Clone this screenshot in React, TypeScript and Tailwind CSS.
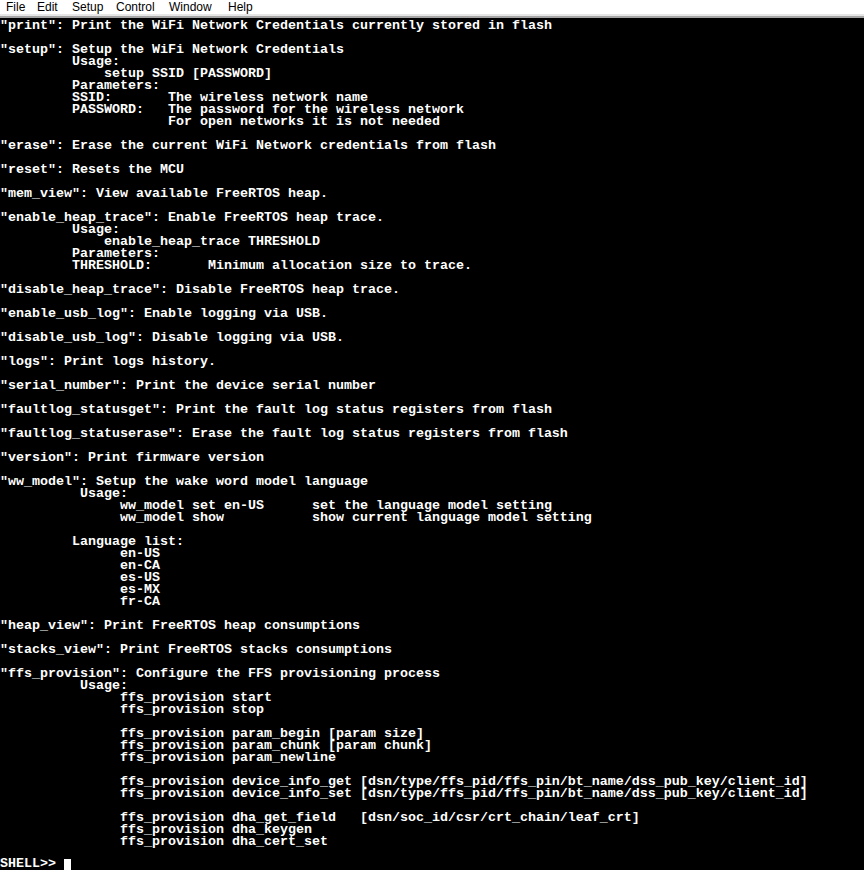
const menu = [
  { label: "File", w: "w-[31px]" },
  { label: "Edit", w: "w-[35px]" },
  { label: "Setup", w: "w-[44px]" },
  { label: "Control", w: "w-[53px]" },
  { label: "Window", w: "w-[59px]" },
  { label: "Help", w: "w-[30px]" },
]

const pad = (n: number) => " ".repeat(n)

// one entry per 12px terminal row, column widths are 8px
const lines: string[] = [
  '"print": Print the WiFi Network Credentials currently stored in flash',
  "",
  '"setup": Setup the WiFi Network Credentials',
  pad(9) + "Usage:",
  pad(13) + "setup SSID [PASSWORD]",
  pad(9) + "Parameters:",
  pad(9) + "SSID:       The wireless network name",
  pad(9) + "PASSWORD:   The password for the wireless network",
  pad(21) + "For open networks it is not needed",
  "",
  '"erase": Erase the current WiFi Network credentials from flash',
  "",
  '"reset": Resets the MCU',
  "",
  '"mem_view": View available FreeRTOS heap.',
  "",
  '"enable_heap_trace": Enable FreeRTOS heap trace.',
  pad(9) + "Usage:",
  pad(13) + "enable_heap_trace THRESHOLD",
  pad(9) + "Parameters:",
  pad(9) + "THRESHOLD:       Minimum allocation size to trace.",
  "",
  '"disable_heap_trace": Disable FreeRTOS heap trace.',
  "",
  '"enable_usb_log": Enable logging via USB.',
  "",
  '"disable_usb_log": Disable logging via USB.',
  "",
  '"logs": Print logs history.',
  "",
  '"serial_number": Print the device serial number',
  "",
  '"faultlog_statusget": Print the fault log status registers from flash',
  "",
  '"faultlog_statuserase": Erase the fault log status registers from flash',
  "",
  '"version": Print firmware version',
  "",
  '"ww_model": Setup the wake word model language',
  pad(10) + "Usage:",
  pad(15) + "ww_model set en-US      set the language model setting",
  pad(15) + "ww_model show           show current language model setting",
  "",
  pad(9) + "Language list:",
  pad(15) + "en-US",
  pad(15) + "en-CA",
  pad(15) + "es-US",
  pad(15) + "es-MX",
  pad(15) + "fr-CA",
  "",
  '"heap_view": Print FreeRTOS heap consumptions',
  "",
  '"stacks_view": Print FreeRTOS stacks consumptions',
  "",
  '"ffs_provision": Configure the FFS provisioning process',
  pad(10) + "Usage:",
  pad(15) + "ffs_provision start",
  pad(15) + "ffs_provision stop",
  "",
  pad(15) + "ffs_provision param_begin [param size]",
  pad(15) + "ffs_provision param_chunk [param chunk]",
  pad(15) + "ffs_provision param_newline",
  "",
  pad(15) + "ffs_provision device_info_get [dsn/type/ffs_pid/ffs_pin/bt_name/dss_pub_key/client_id]",
  pad(15) + "ffs_provision device_info_set [dsn/type/ffs_pid/ffs_pin/bt_name/dss_pub_key/client_id]",
  "",
  pad(15) + "ffs_provision dha_get_field   [dsn/soc_id/csr/crt_chain/leaf_crt]",
  pad(15) + "ffs_provision dha_keygen",
  pad(15) + "ffs_provision dha_cert_set",
  "",
]

export default function App() {
  return (
    <div className="w-[865px] h-[870px] overflow-hidden bg-white flex flex-col">
      {/* menu bar */}
      <div className="h-[14px] flex items-center pl-[6px] bg-white text-[12px] leading-[14px] text-black font-['Liberation_Sans','Noto_Sans',sans-serif]">
        {menu.map((m) => (
          <span key={m.label} className={m.w}>
            {m.label}
          </span>
        ))}
      </div>
      <div className="h-[2px] w-[864px] bg-[#e6e6e6]" />
      <div className="h-[2px] w-[864px] bg-[#a6a6a6]" />

      {/* terminal */}
      <div className="w-[864px] flex-1 bg-black text-white font-bold font-['Liberation_Mono','DejaVu_Sans_Mono',monospace] text-[13.333px] leading-[16px] whitespace-pre">
        {lines.map((l, i) => (
          <div key={i} className="h-[12px]">
            {l}
          </div>
        ))}
        <div className="h-[12px] flex items-end">
          <span className="leading-[12px]">SHELL&gt;&gt; </span>
          <span className="inline-block w-[7px] h-[11px] bg-white" />
        </div>
      </div>
    </div>
  )
}
